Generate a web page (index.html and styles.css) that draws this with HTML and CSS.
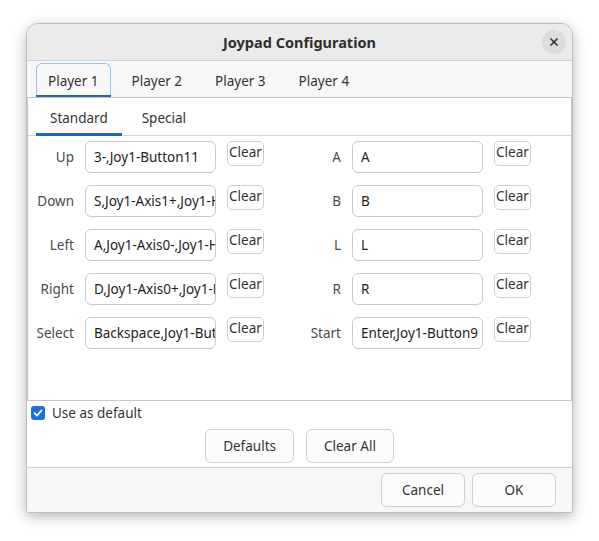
FILE: index.html
```html
<!DOCTYPE html>
<html lang="en">
<head>
    <meta charset="UTF-8">
    <meta name="viewport" content="width=device-width, initial-scale=1.0">
    <title>Joypad Configuration</title>
    <link rel="stylesheet" href="styles.css">
</head>
<body>
    <div class="window">
        <div class="titlebar">
            <span class="title">Joypad Configuration</span>
            <button class="close" aria-label="Close">
                <svg width="10" height="10" viewBox="0 0 10 10">
                    <path d="M1.5 1.5 L8.5 8.5 M8.5 1.5 L1.5 8.5" stroke="#2e2e2e" stroke-width="1.5" fill="none"/>
                </svg>
            </button>
        </div>
        <div class="tabs players">
            <div class="tab active">Player 1</div>
            <div class="tab">Player 2</div>
            <div class="tab">Player 3</div>
            <div class="tab">Player 4</div>
        </div>
        <div class="panel">
            <div class="tabs pages">
                <div class="tab active">Standard</div>
                <div class="tab">Special</div>
            </div>
            <div class="bindings">
                <div class="side">
                    <span class="label">Up</span>
                    <div class="field">3-,Joy1-Button11</div>
                    <button class="clear">Clear</button>

                    <span class="label">Down</span>
                    <div class="field">S,Joy1-Axis1+,Joy1-Hat0-Down</div>
                    <button class="clear">Clear</button>

                    <span class="label">Left</span>
                    <div class="field">A,Joy1-Axis0-,Joy1-Hat0-Left</div>
                    <button class="clear">Clear</button>

                    <span class="label">Right</span>
                    <div class="field">D,Joy1-Axis0+,Joy1-Hat0-Right</div>
                    <button class="clear">Clear</button>

                    <span class="label">Select</span>
                    <div class="field">Backspace,Joy1-Button8</div>
                    <button class="clear">Clear</button>
                </div>
                <div class="side right">
                    <span class="label">A</span>
                    <div class="field">A</div>
                    <button class="clear">Clear</button>

                    <span class="label">B</span>
                    <div class="field">B</div>
                    <button class="clear">Clear</button>

                    <span class="label">L</span>
                    <div class="field">L</div>
                    <button class="clear">Clear</button>

                    <span class="label">R</span>
                    <div class="field">R</div>
                    <button class="clear">Clear</button>

                    <span class="label">Start</span>
                    <div class="field">Enter,Joy1-Button9</div>
                    <button class="clear">Clear</button>
                </div>
            </div>
        </div>
        <div class="options">
            <label class="check">
                <span class="box">
                    <svg width="10" height="10" viewBox="0 0 10 10">
                        <path d="M1.5 5.2 L4 7.6 L8.6 2.4" stroke="#fff" stroke-width="1.8" fill="none" stroke-linecap="round" stroke-linejoin="round"/>
                    </svg>
                </span>
                Use as default
            </label>
            <div class="actions">
                <button class="btn wide">Defaults</button>
                <button class="btn wide">Clear All</button>
            </div>
        </div>
        <div class="footer">
            <button class="btn">Cancel</button>
            <button class="btn">OK</button>
        </div>
    </div>
</body>
</html>
```

FILE: styles.css
```css
body {
    margin: 0;
    height: 541px;
    background: #fff;
    font-family: "Noto Sans", "DejaVu Sans", sans-serif;
    font-size: 13.5px;
    color: #333;
    overflow: hidden;
}
button {
    font: inherit;
    color: inherit;
}
.window {
    position: relative;
    margin: 23px 0 0 26px;
    width: 545px;
    height: 488px;
    border: 1px solid #bdbdbd;
    border-radius: 12px 12px 3px 3px;
    background: #fff;
    box-shadow: 0 4px 14px rgba(0, 0, 0, 0.28);
    overflow: hidden;
    display: flex;
    flex-direction: column;
}
.titlebar {
    height: 35px;
    flex: none;
    background: #ebebeb;
    border-bottom: 1px solid #d2d2d2;
    display: flex;
    justify-content: center;
    align-items: center;
    padding-bottom: 1px;
}
.title {
    font-size: 14.5px;
    font-weight: bold;
    color: #2e2e2e;
}
.close {
    position: absolute;
    top: 6px;
    right: 6px;
    width: 24px;
    height: 24px;
    padding: 0;
    border: none;
    border-radius: 50%;
    background: #dcdcdc;
    display: flex;
    justify-content: center;
    align-items: center;
}
.tabs {
    display: flex;
    flex: none;
}
.players {
    height: 36px;
    background: #f8f8f8;
    border-bottom: 1px solid #c4c4c4;
    padding-left: 9px;
    gap: 9px;
    align-items: stretch;
}
.players .tab {
    position: relative;
    margin-top: 2px;
    padding: 0 11px;
    display: flex;
    align-items: center;
    border: 1px solid transparent;
    border-bottom: none;
    border-radius: 6px 6px 0 0;
}
.players .tab.active {
    border-color: #9cc3ef;
}
.tab.active::after {
    content: "";
    position: absolute;
    left: -1px;
    right: -1px;
    bottom: 0;
    height: 2px;
    background: #1c64c4;
}
.panel {
    flex: none;
    height: 302px;
    border-left: 1px solid #c4c4c4;
    border-right: 1px solid #c4c4c4;
    border-bottom: 1px solid #c8c8c8;
    background: #fff;
}
.pages {
    height: 37px;
    border-bottom: 1px solid #d6d6d6;
    padding-left: 8px;
    gap: 6px;
}
.pages .tab {
    position: relative;
    padding: 2px 14px 0;
    display: flex;
    align-items: center;
}
.pages .tab.active::after {
    left: 0;
    right: 0;
    bottom: -1px;
    height: 3px;
}
.bindings {
    display: flex;
    padding: 5px 0 0 5px;
    gap: 17px;
}
.side {
    display: grid;
    grid-template-columns: 41px 131px 37px;
    column-gap: 11px;
    row-gap: 12px;
}
.side.right {
    grid-template-columns: 60px 131px 37px;
}
.label {
    align-self: center;
    text-align: right;
    color: #4a4a4a;
    white-space: nowrap;
}
.field {
    height: 30px;
    line-height: 30px;
    border: 1px solid #c9c9c9;
    border-radius: 6px;
    padding: 0 2px 0 8px;
    color: #1e1e1e;
    white-space: nowrap;
    overflow: hidden;
}
.clear {
    align-self: start;
    height: 25px;
    padding: 0 0 3px 1px;
    border: 1px solid #cfcfcf;
    border-radius: 5px;
    background: #fff;
    text-align: left;
    white-space: nowrap;
    overflow: hidden;
}
.options {
    flex: 1;
    background: #fff;
    border-bottom: 1px solid #d2d2d2;
    display: flex;
    flex-direction: column;
}
.check {
    display: flex;
    align-items: center;
    gap: 7px;
    margin: 3px 0 0 4px;
}
.box {
    width: 14px;
    height: 14px;
    border-radius: 3px;
    background: #1c71d8;
    display: flex;
    justify-content: center;
    align-items: center;
}
.actions {
    display: flex;
    justify-content: center;
    gap: 12px;
    margin-top: 7px;
}
.btn {
    height: 34px;
    min-width: 84px;
    padding: 0 16px;
    border: 1px solid #cfcfcf;
    border-radius: 6px;
    background: #fcfcfc;
}
.btn.wide {
    padding: 0 17px;
}
.footer {
    height: 44px;
    flex: none;
    background: #f7f7f7;
    display: flex;
    justify-content: flex-end;
    align-items: center;
    gap: 7px;
    padding-right: 16px;
}
```
